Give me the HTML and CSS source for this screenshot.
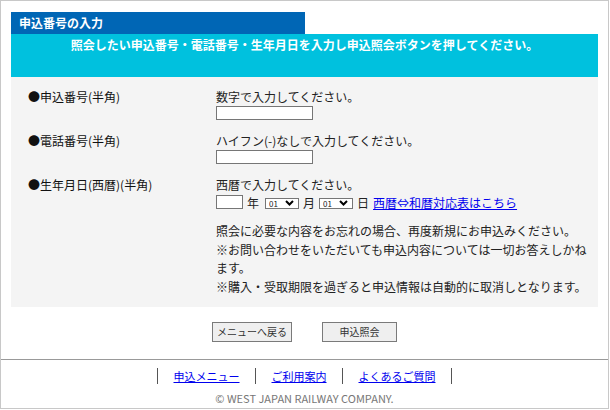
FILE: index.html
```html
<!DOCTYPE html>
<html lang="ja">
<head>
<meta charset="utf-8">
<title>申込番号の入力</title>
<link rel="stylesheet" href="styles.css">
</head>
<body>
<div class="page">
  <div class="main">
    <div class="tab">申込番号の入力</div>
    <div class="band">照会したい申込番号・電話番号・生年月日を入力し申込照会ボタンを押してください。</div>
    <div class="form">
      <div class="row">
        <div class="label">●申込番号(半角)</div>
        <div class="field">
          <div class="hint">数字で入力してください。</div>
          <input class="text" type="text">
        </div>
      </div>
      <div class="row">
        <div class="label">●電話番号(半角)</div>
        <div class="field">
          <div class="hint">ハイフン(-)なしで入力してください。</div>
          <input class="text" type="text">
        </div>
      </div>
      <div class="row last">
        <div class="label">●生年月日(西暦)(半角)</div>
        <div class="field">
          <div class="hint">西暦で入力してください。</div>
          <div class="date">
            <input class="year" type="text"><span class="unit u-year">年</span><span class="sel"><select><option>01</option></select><svg class="chev" width="9" height="6" viewBox="0 0 9 6"><polyline points="1,1 4.5,4.5 8,1" fill="none" stroke="#000" stroke-width="2"/></svg></span><span class="unit">月</span><span class="sel"><select><option>01</option></select><svg class="chev" width="9" height="6" viewBox="0 0 9 6"><polyline points="1,1 4.5,4.5 8,1" fill="none" stroke="#000" stroke-width="2"/></svg></span><span class="unit">日</span><a class="link" href="#">西暦⇔和暦対応表はこちら</a>
          </div>
          <p class="note">照会に必要な内容をお忘れの場合、再度新規にお申込みください。<br>※お問い合わせをいただいても申込内容については一切お答えしかねます。<br>※購入・受取期限を過ぎると申込情報は自動的に取消しとなります。</p>
        </div>
      </div>
    </div>
    <div class="buttons">
      <button class="btn btn-back" type="button">メニューへ戻る</button>
      <button class="btn btn-go" type="button">申込照会</button>
    </div>
  </div>
  <div class="footer">
    <ul class="nav">
      <li><a href="#">申込メニュー</a></li>
      <li><a href="#">ご利用案内</a></li>
      <li><a href="#">よくあるご質問</a></li>
    </ul>
    <div class="copy">© WEST JAPAN RAILWAY COMPANY.</div>
  </div>
</div>
</body>
</html>
```
FILE: styles.css
```css
html, body {
  margin: 0;
  padding: 0;
  background: #fff;
}
body {
  font-family: "Noto Sans CJK JP", "Noto Sans", sans-serif;
  font-size: 12px;
  color: #222;
}
.page {
  box-sizing: border-box;
  width: 609px;
  height: 409px;
  border: 1px solid #c8c8c8;
  display: flex;
  flex-direction: column;
}
.main {
  padding: 11px 10px 0 10px;
}
.tab {
  width: 294px;
  height: 22px;
  line-height: 22px;
  box-sizing: border-box;
  padding-left: 8px;
  background: #0066b5;
  color: #fff;
  font-weight: bold;
}
.band {
  background: #00c1de;
  color: #fff;
  font-weight: bold;
  text-align: center;
  line-height: 18px;
  padding: 2px 0 23px;
}
.form {
  background: #f4f4f4;
  padding: 11px 0 10px;
}
.row {
  display: flex;
  padding-bottom: 12px;
}
.row.last {
  padding-bottom: 0;
}
.label {
  width: 188px;
  padding-left: 17px;
  line-height: 18px;
  color: #111;
}
.field {
  width: 376px;
}
.hint {
  line-height: 18px;
}
.text {
  display: block;
  box-sizing: border-box;
  width: 97px;
  height: 14px;
  margin: 0;
  padding: 0;
  border: 1px solid #767676;
  background: #fff;
}
.date {
  display: flex;
  align-items: flex-end;
  height: 14px;
  margin-top: 1px;
}
.year {
  box-sizing: border-box;
  width: 27px;
  height: 14px;
  margin: 0;
  padding: 0;
  border: 1px solid #767676;
  background: #fff;
}
.unit {
  line-height: 12px;
  margin: 0 4px;
}
.u-year {
  margin: 0 6px 0 4px;
}
.sel {
  position: relative;
  display: block;
  margin-bottom: 0;
}
.sel select {
  display: block;
  appearance: none;
  -webkit-appearance: none;
  box-sizing: border-box;
  width: 34px;
  height: 11px;
  margin: 0;
  padding: 0 0 0 3px;
  border: 1px solid #767676;
  border-radius: 0;
  background: #fff;
  font-family: "Noto Sans CJK JP", sans-serif;
  font-size: 8px;
  line-height: 9px;
  color: #222;
}
.chev {
  position: absolute;
  right: 5px;
  top: 2px;
  pointer-events: none;
}
.link {
  line-height: 12px;
  color: #0000ee;
  text-decoration: underline;
}
.note {
  margin: 13px 0 0;
  line-height: 18.67px;
}
.buttons {
  display: flex;
  justify-content: center;
  gap: 30px;
  padding: 15px 0 17px;
}
.btn {
  box-sizing: border-box;
  height: 20px;
  margin: 0;
  padding: 0;
  border: 1px solid #7a7a7a;
  border-radius: 0;
  background: #efefef;
  font-family: "Noto Sans CJK JP", sans-serif;
  font-size: 10px;
  color: #333;
}
.btn-back {
  width: 80px;
}
.btn-go {
  width: 75px;
}
.footer {
  border-top: 1px solid #999;
  padding-top: 8px;
}
.nav {
  display: flex;
  justify-content: center;
  list-style: none;
  margin: 0;
  padding: 0;
}
.nav li {
  border-left: 1px solid #555;
  height: 16px;
  line-height: 16px;
  padding: 0 15.5px;
  font-size: 11px;
}
.nav li:last-child {
  border-right: 1px solid #555;
}
.nav a {
  color: #0000ee;
  text-decoration: underline;
}
.copy {
  margin-top: 6px;
  text-align: center;
  font-size: 11px;
  line-height: 16px;
  color: #777;
}
```
